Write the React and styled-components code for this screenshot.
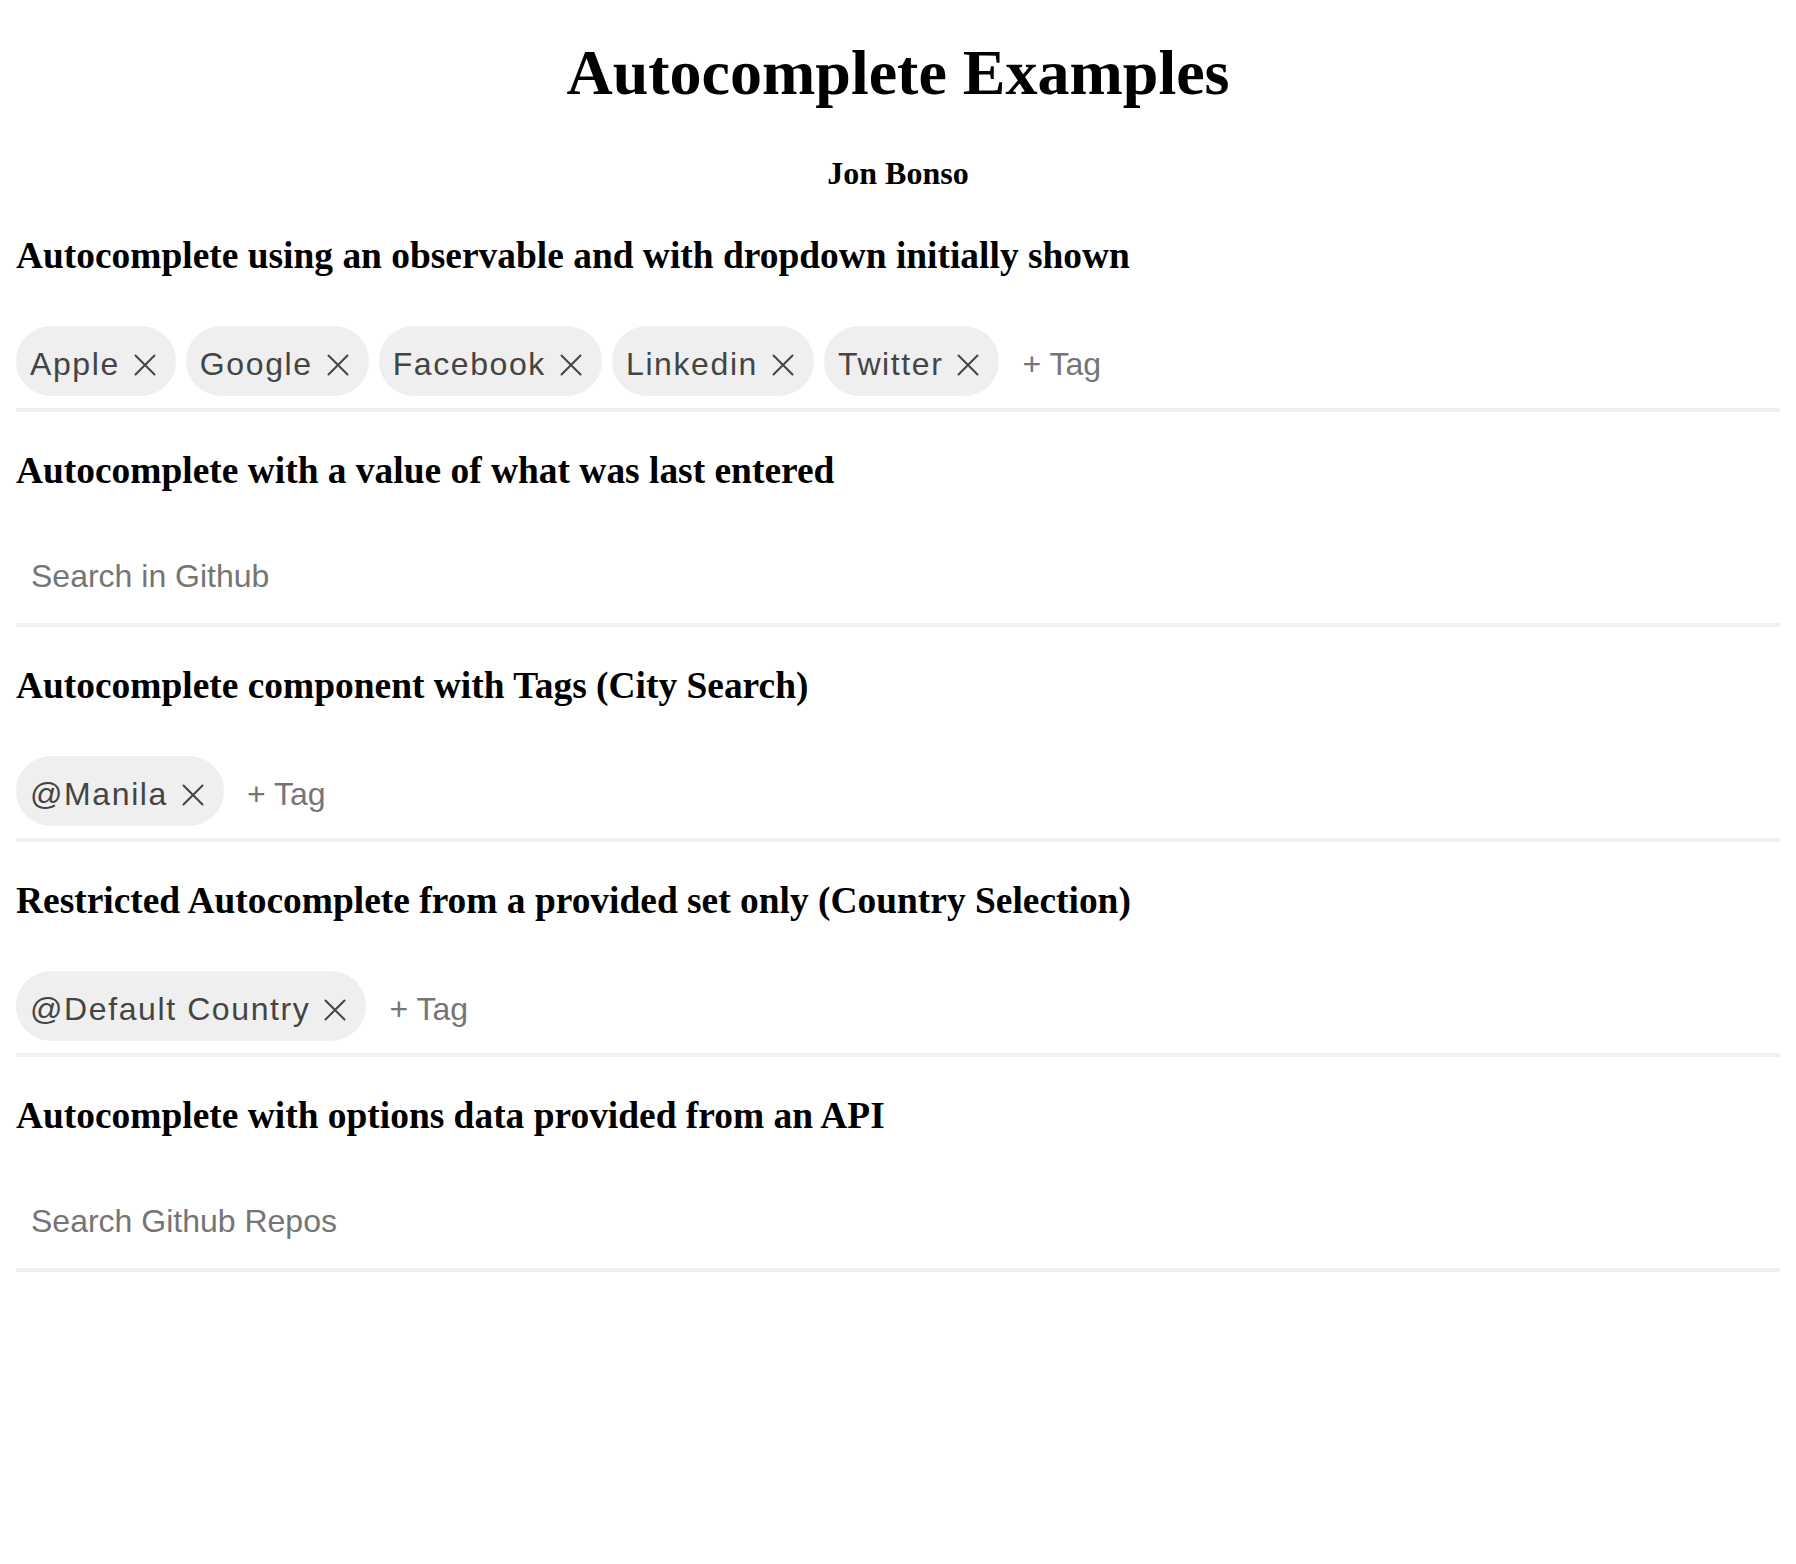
import React from "react";
import styled, { createGlobalStyle } from "styled-components";

const GlobalStyle = createGlobalStyle`
  body {
    margin: 0;
    background: #ffffff;
  }
`;

const Page = styled.div`
  padding: 0 16px;
  font-family: "Liberation Serif", "Times New Roman", serif;
  color: #000;
`;

const Header = styled.header`
  padding-bottom: 5px;
  text-align: center;
`;

const Title = styled.h1`
  margin: 36px 0 0;
  font-size: 64px;
  line-height: 74px;
  font-weight: 700;
`;

const Author = styled.h4`
  margin: 45px 0 0;
  font-size: 32px;
  line-height: 37px;
  font-weight: 700;
`;

const Section = styled.section`
  padding-top: 37px;
`;

const SectionTitle = styled.h3`
  margin: 0;
  font-size: 37.44px;
  line-height: 44px;
  font-weight: 700;
`;

const InputBox = styled.div`
  display: flex;
  flex-wrap: wrap;
  align-items: flex-start;
  gap: 10px;
  padding: 48px 0 12px;
  border-bottom: 4px solid #efefef;
  font-family: "Liberation Sans", Arial, sans-serif;
`;

const Chip = styled.div`
  display: inline-flex;
  align-items: center;
  box-sizing: border-box;
  height: 70px;
  padding: 6px 15px 0 14px;
  border-radius: 35px;
  background: #efefef;
  color: #444;
  font-size: 32px;
  line-height: 64px;
  letter-spacing: 1.6px;
  white-space: nowrap;
`;

const DeleteIcon = styled.svg`
  width: 32px;
  height: 32px;
  margin: 2px 0 0 9px;
  flex: none;
`;

const TextInput = styled.input`
  box-sizing: border-box;
  height: 70px;
  border: none;
  outline: none;
  background: transparent;
  font-family: "Liberation Sans", Arial, sans-serif;
  font-size: 32px;
  padding: ${(p) => (p.$tag ? "6px 0 0 13px" : "0 15px")};
  width: ${(p) => (p.$tag ? "200px" : "100%")};
  color: #444;

  &::placeholder {
    color: #757575;
    opacity: 1;
  }
`;

const CloseIcon = () => (
  <DeleteIcon viewBox="0 0 32 32">
    <path
      d="M6.5 6.5 L25.5 25.5 M25.5 6.5 L6.5 25.5"
      stroke="#444"
      strokeWidth="2"
      strokeLinecap="round"
      fill="none"
    />
  </DeleteIcon>
);

const sections = [
  {
    title: "Autocomplete using an observable and with dropdown initially shown",
    tags: ["Apple", "Google", "Facebook", "Linkedin", "Twitter"],
  },
  {
    title: "Autocomplete with a value of what was last entered",
    placeholder: "Search in Github",
  },
  {
    title: "Autocomplete component with Tags (City Search)",
    tags: ["@Manila"],
  },
  {
    title: "Restricted Autocomplete from a provided set only (Country Selection)",
    tags: ["@Default Country"],
  },
  {
    title: "Autocomplete with options data provided from an API",
    placeholder: "Search Github Repos",
  },
];

export default function App() {
  return (
    <Page>
      <GlobalStyle />
      <Header>
        <Title>Autocomplete Examples</Title>
        <Author>Jon Bonso</Author>
      </Header>
      {sections.map((s) => (
        <Section key={s.title}>
          <SectionTitle>{s.title}</SectionTitle>
          <InputBox>
            {s.tags ? (
              <>
                {s.tags.map((t) => (
                  <Chip key={t}>
                    <span>{t}</span>
                    <CloseIcon />
                  </Chip>
                ))}
                <TextInput $tag placeholder="+ Tag" />
              </>
            ) : (
              <TextInput placeholder={s.placeholder} />
            )}
          </InputBox>
        </Section>
      ))}
    </Page>
  );
}
